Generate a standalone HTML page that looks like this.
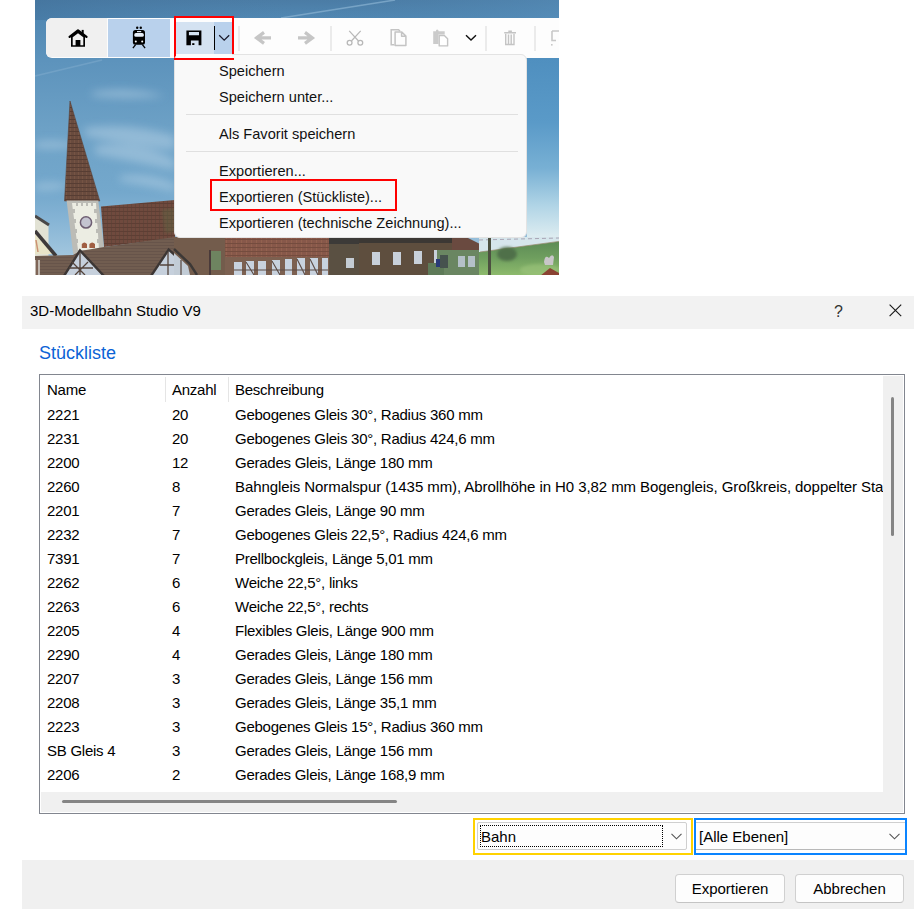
<!DOCTYPE html>
<html><head><meta charset="utf-8">
<style>
*{margin:0;padding:0;box-sizing:border-box}
html,body{width:914px;height:909px;background:#fff;overflow:hidden;position:relative;font-family:"Liberation Sans",sans-serif;color:#000}
.abs{position:absolute}
#scene{position:absolute;left:35px;top:0;width:524px;height:275px;overflow:hidden}
#scene svg{position:absolute;left:0;top:0}
.mi{position:absolute;left:44px;font-size:14.6px;line-height:20px;white-space:nowrap;color:#111}
.sep{position:absolute;left:11px;width:332px;height:1px;background:#e0e0e0}
#title{position:absolute;left:22px;top:296px;width:892px;height:33px;background:#f2f2f2}
.t{position:absolute;white-space:nowrap;font-size:15px;line-height:20px}
#lv{position:absolute;left:39px;top:374px;width:866px;height:440px;border:1px solid #82868f;background:#fff;overflow:hidden}
.row{position:absolute;left:0;height:24px;width:843px;overflow:hidden;font-size:15px;line-height:24px;white-space:nowrap;letter-spacing:-0.25px}
.row span{position:absolute;top:0}
.c1{left:7px}.c2{left:132px}.c3{left:195px}
.hdiv{position:absolute;top:2px;width:1px;height:25px;background:#e5e5e5}
#vtrack{position:absolute;left:843px;top:1px;width:20px;height:436px;background:#f0f0f0}
#htrack{position:absolute;left:1px;top:417px;width:862px;height:20px;background:#f0f0f0}
#vthumb{position:absolute;left:851px;top:22px;width:3px;height:139px;border-radius:2px;background:#858585}
#hthumb{position:absolute;left:22px;top:425px;width:335px;height:3px;border-radius:2px;background:#858585}
#footer{position:absolute;left:22px;top:860px;width:892px;height:49px;background:#f0f0f0}
.btn{position:absolute;top:874px;height:29px;border:1px solid #d0d0d0;border-bottom-color:#c4c4c4;border-radius:4px;background:#fdfdfd;font-size:15px;line-height:28px;text-align:center}
</style></head>
<body>

<div id="scene">
<svg width="524" height="275" viewBox="35 0 524 275">
<defs>
<linearGradient id="sky" x1="0" y1="0" x2="0" y2="275" gradientUnits="userSpaceOnUse">
<stop offset="0" stop-color="#4b7ca5"/>
<stop offset="0.066" stop-color="#5188b3"/>
<stop offset="0.22" stop-color="#5d93bc"/>
<stop offset="0.47" stop-color="#6da1c6"/>
<stop offset="0.70" stop-color="#74a8cc"/>
<stop offset="0.80" stop-color="#86b4d5"/>
<stop offset="0.93" stop-color="#a2c6de"/>
<stop offset="1" stop-color="#aacbe0"/>
</linearGradient>
<linearGradient id="skyR" x1="0" y1="58" x2="0" y2="242" gradientUnits="userSpaceOnUse">
<stop offset="0" stop-color="#4f8fbf"/>
<stop offset="0.35" stop-color="#5a9ac8"/>
<stop offset="0.6" stop-color="#78b0d4"/>
<stop offset="0.8" stop-color="#b0d4e6"/>
<stop offset="1" stop-color="#e4f0f2"/>
</linearGradient>
<linearGradient id="field" x1="0" y1="240" x2="0" y2="275" gradientUnits="userSpaceOnUse">
<stop offset="0" stop-color="#5c8a55"/>
<stop offset="0.5" stop-color="#6e9e5e"/>
<stop offset="1" stop-color="#8dba6c"/>
</linearGradient>
<linearGradient id="hz" x1="35" y1="0" x2="559" y2="0" gradientUnits="userSpaceOnUse">
<stop offset="0" stop-color="#40709a" stop-opacity="0.5"/>
<stop offset="0.5" stop-color="#4a7ca6" stop-opacity="0"/>
<stop offset="1" stop-color="#5890bc" stop-opacity="0.5"/>
</linearGradient>
<pattern id="roof3" width="3" height="3" patternUnits="userSpaceOnUse">
<rect width="3" height="3" fill="#715d50"/>
<rect x="0" y="2" width="3" height="1" fill="#67544a"/>
</pattern>
<filter id="bl" x="-30%" y="-100%" width="160%" height="300%"><feGaussianBlur stdDeviation="4"/></filter>
<filter id="bl1" x="-20%" y="-20%" width="140%" height="140%"><feGaussianBlur stdDeviation="0.7"/></filter>
<filter id="bl2" x="-20%" y="-20%" width="140%" height="140%"><feGaussianBlur stdDeviation="1.5"/></filter>
<pattern id="tiles" width="4" height="4" patternUnits="userSpaceOnUse">
<rect width="4" height="4" fill="#694b3e"/>
<rect x="0" y="3" width="4" height="1" fill="#573d33"/>
<rect x="2" y="0" width="1" height="3" fill="#765444"/>
</pattern>
<pattern id="tiles2" width="4" height="4" patternUnits="userSpaceOnUse">
<rect width="4" height="4" fill="#704a3e"/>
<rect x="0" y="3" width="4" height="1" fill="#5e3e34"/>
<rect x="3" y="0" width="1" height="3" fill="#62463a"/>
</pattern>
<pattern id="bricks" width="5" height="4" patternUnits="userSpaceOnUse">
<rect width="5" height="4" fill="#87584a"/>
<rect x="0" y="3" width="5" height="1" fill="#744c3e"/>
<rect x="1" y="0" width="1" height="3" fill="#93624f"/>
</pattern>
</defs>
<rect x="35" y="0" width="524" height="275" fill="url(#sky)"/>
<rect x="35" y="0" width="524" height="20" fill="url(#hz)"/>
<rect x="527" y="58" width="32" height="184" fill="url(#skyR)"/>
<!-- clouds -->
<g filter="url(#bl)" fill="#b0cee3" opacity="0.55">
<path d="M92 92Q130 86 165 96Q130 100 92 96Z"/>
<path d="M85 128Q130 122 175 136L175 150Q130 146 85 136Z"/>
<path d="M95 146Q140 140 175 160L175 170Q135 162 95 154Z"/>
<path d="M35 142Q60 138 80 146Q60 150 35 148Z"/>
<path d="M35 184Q55 180 70 186Q55 192 35 190Z"/>
<path d="M120 176Q150 172 175 184L175 192Q150 186 120 181Z"/>
</g>
<path d="M35 76L102 60" stroke="#92b8d6" stroke-width="1.4" opacity="0.35" filter="url(#bl1)"/>
<path d="M281 18L395 0" stroke="#8ab3d2" stroke-width="1.5" opacity="0.7" filter="url(#bl1)"/>
<!-- spire -->
<path d="M70 101L64.5 201H99.8Z" fill="url(#tiles)"/>
<path d="M70 101L64.5 201H99.8Z" fill="none" stroke="#5a3e34" stroke-width="0.7" opacity="0.8"/>
<!-- church roof -->
<path d="M101 206.5L175 200V238L104 247Z" fill="url(#tiles2)"/>
<path d="M162 210L175 208V232L165 233Z" fill="#5f6a45" opacity="0.4" filter="url(#bl2)"/>
<!-- tower -->
<path d="M66.6 200.5H98.3L103.8 247L104 254H73.2Z" fill="#bcbcb6"/>
<path d="M72 203H96L99 250H78Z" fill="#ecede3"/>
<g fill="#bcbcb6">
<rect x="72" y="209" width="3" height="4"/><rect x="73" y="219" width="3" height="4"/><rect x="74" y="229" width="3" height="4"/><rect x="75" y="239" width="3" height="4"/>
<rect x="94" y="209" width="3" height="4"/><rect x="95" y="219" width="3" height="4"/><rect x="96" y="229" width="3" height="4"/><rect x="97" y="239" width="3" height="4"/>
<rect x="76" y="203" width="2" height="3"/><rect x="81" y="203" width="2" height="3"/><rect x="86" y="203" width="2" height="3"/><rect x="91" y="203" width="2" height="3"/>
</g>
<circle cx="86" cy="222.4" r="5.6" fill="#c4c4d0" stroke="#6e5e72" stroke-width="1.5"/>
<path d="M81.8 248V244Q84.4 241 87 244V248Z" fill="#a05e42"/><path d="M89.4 248V244Q92.2 241 95 244V248Z" fill="#a05e42"/>
<!-- left building -->
<path d="M35 217L48.5 225V256H35Z" fill="#e2e2d4"/>
<path d="M35 216L49 225" stroke="#4a4848" stroke-width="3"/>
<path d="M35 232L53 254H35Z" fill="#e8e4c8"/>
<path d="M35 231L56 256" stroke="#3e3a3a" stroke-width="3.5"/>
<path d="M36 240L38 252" stroke="#c07050" stroke-width="1.5" opacity="0.7"/>
<!-- lower roof -->
<path d="M35 256L73 255L80 251L104 247L175 237V275H35Z" fill="url(#roof3)"/>
<rect x="35" y="260" width="5" height="15" fill="#c0b8b0"/>
<path d="M37 260V275" stroke="#6a4a3a" stroke-width="1.5"/>
<!-- gable 1 -->
<path d="M80 251L65 275H103Z" fill="#c6d0dc"/>
<path d="M64 276L80 250.5L104 276" stroke="#3c3634" stroke-width="2.4" fill="none"/>
<path d="M80 252V275 M69 268H93 M72 262L85 275 M88 262L75 275" stroke="#54443c" stroke-width="1.3"/>
<!-- gable 2 -->
<path d="M168.7 250L152 275H175V254Z" fill="#c6d0dc"/>
<path d="M151 276L168.7 249.5L177 257" stroke="#3c3634" stroke-width="2.4" fill="none"/>
<path d="M168 252V275 M160 265H175" stroke="#54443c" stroke-width="1.3"/>
<!-- bottom strip buildings -->
<rect x="174" y="237" width="52" height="38" fill="#735c4c"/>
<path d="M174 249L190 264L197 275" stroke="#3c3836" stroke-width="2.4" fill="none"/>
<path d="M174 253L188 266L190 275H174Z" fill="#c2ccd6"/>
<path d="M181 260V275" stroke="#54443c" stroke-width="1.2"/>
<rect x="211" y="251" width="10" height="19" fill="#6e8460"/>
<rect x="209" y="250" width="2" height="25" fill="#4a3a3a"/>
<rect x="225" y="237" width="104" height="22" fill="url(#bricks)"/>
<rect x="225" y="257" width="104" height="18" fill="#7c6050"/>
<g fill="#c8d2de">
<rect x="234" y="262" width="8" height="13"/><rect x="246" y="261" width="8" height="14"/><rect x="258" y="261" width="8" height="14"/><rect x="272" y="260" width="8" height="15"/><rect x="285" y="259" width="7" height="16"/><rect x="297" y="258" width="8" height="17"/><rect x="310" y="258" width="8" height="17"/><rect x="322" y="258" width="6" height="17"/>
</g>
<g stroke="#5a4a44" stroke-width="1.1"><path d="M246 262L254 275M272 261L280 275M297 259L305 275M310 259L318 275M234 270H328"/></g>
<rect x="329" y="237" width="30" height="38" fill="#5a5042"/>
<rect x="329" y="237" width="30" height="7" fill="#3c3a38"/>
<rect x="346" y="258" width="8" height="10" fill="#c4ccd4"/>
<rect x="359" y="237" width="100" height="38" fill="#5e4e3e"/>
<rect x="359" y="237" width="100" height="6" fill="#3c3834"/>
<g fill="#c8d0da">
<rect x="372" y="252" width="8" height="13"/><rect x="393" y="252" width="8" height="13"/><rect x="414" y="251" width="8" height="13"/><rect x="434" y="250" width="6" height="13"/>
</g>
<!-- signal box -->
<path d="M452 237H466L486 247L487 257H452Z" fill="#6a4a40"/>
<rect x="437" y="250" width="43" height="25" fill="#6a8662"/>
<rect x="428" y="263" width="16" height="12" fill="#5e7a58"/>
<rect x="458" y="256" width="7" height="11" fill="#b4c0c8"/><rect x="468" y="256" width="7" height="11" fill="#b4c0c8"/>
<rect x="440" y="255" width="8" height="13" fill="#46524e"/>
<rect x="436" y="259" width="4" height="8" fill="#2a3a78"/>
<!-- right landscape -->
<rect x="479" y="237" width="80" height="38" fill="url(#field)"/>
<path d="M479 237H559V241.4L480 252H479Z" fill="#d6e6ec"/>
<path d="M480 252L559 241.4" stroke="#9a8a70" stroke-width="1" opacity="0.7"/>
<path d="M479 240L559 238" stroke="#8a7a90" stroke-width="1" stroke-dasharray="4 3" opacity="0.6"/>
<ellipse cx="507" cy="254" rx="10" ry="7" fill="#50704a" filter="url(#bl2)"/>
<ellipse cx="540" cy="270" rx="20" ry="6" fill="#9cc47c" opacity="0.6" filter="url(#bl2)"/>
<rect x="488" y="237" width="3" height="38" fill="#4c5040"/>
<path d="M544 262Q545 254 549 258Q552 253 554 257L553 265H545Z" fill="#c8c6c8" filter="url(#bl1)"/>
<path d="M540 276L550 268L559 273V276Z" fill="#8a4232"/>
</svg>
</div>


<!-- toolbar -->
<div class="abs" style="left:46px;top:18px;width:513px;height:40px;background:#fdfdfd;border-radius:6px 0 0 6px;overflow:hidden">
 <div class="abs" style="left:0;top:0;width:61px;height:39px;background:#f0f0f0"></div>
 <div class="abs" style="left:62px;top:1px;width:62px;height:38px;background:#b9d1ec"></div>
 <div class="abs" style="left:130px;top:4px;width:38px;height:32px;background:#d4e2f1"></div>
 <div class="abs" style="left:168px;top:4px;width:18px;height:32px;background:#b9d1ec"></div>
 <div class="abs" style="left:168px;top:8px;width:1px;height:24px;background:#000"></div>
 <div class="abs" style="left:192px;top:8px;width:2px;height:25px;background:#ebebeb"></div>
 <div class="abs" style="left:284px;top:8px;width:2px;height:25px;background:#ebebeb"></div>
 <div class="abs" style="left:439px;top:8px;width:2px;height:25px;background:#ebebeb"></div>
 <div class="abs" style="left:488px;top:8px;width:2px;height:25px;background:#ebebeb"></div>
</div>
<svg class="abs" style="left:0;top:0" width="559" height="60" viewBox="0 0 559 60">
 <!-- home -->
 <path fill="#000" fill-rule="evenodd" d="M71 36L78 30.8L85 36V46.8H71Z M72.7 37.2L78 33.2L83.3 37.2V45.2H80.4V40H75.6V45.2H72.7Z"/>
 <path d="M69.6 36.9L78 30.4L86.5 36.9" stroke="#000" stroke-width="2.3" stroke-linecap="round" stroke-linejoin="round" fill="none"/>
 <rect x="81.7" y="29.9" width="2" height="4" fill="#000"/>
 <!-- train -->
 <circle cx="137.2" cy="27.8" r="1.2" fill="#000"/><circle cx="140.8" cy="27.8" r="1.2" fill="#000"/>
 <rect x="132.9" y="29.9" width="12.1" height="14.9" rx="2.5" fill="#000"/>
 <rect x="137" y="31" width="4.2" height="1.2" fill="#dfe9f5"/>
 <rect x="134.3" y="33" width="9.5" height="3.8" rx="1.6" fill="#e6eef8"/>
 <circle cx="135.8" cy="41.4" r="1" fill="#fff"/><circle cx="142.2" cy="41.4" r="1" fill="#fff"/>
 <path d="M135.6 44.6L132.9 48.2M142.4 44.6L145.1 48.2" stroke="#000" stroke-width="1.3"/>
 <!-- floppy -->
 <path fill="#000" fill-rule="evenodd" d="M186.4 30.5H201.4V45.2H186.4Z M188.9 32H199V35.2H188.9Z M190.9 40.6H198.6V45.2H190.9Z"/>
 <rect x="192.2" y="43.2" width="2.2" height="1.8" fill="#000"/>
 <path d="M219.2 35.2L224.2 40.2L229.2 35.2" stroke="#1a1a2a" stroke-width="1.3" fill="none"/>
 <!-- arrows -->
 <path d="M271 37.9H257 M264 32.4L256.6 37.9L264 43.4" stroke="#c6c6c6" stroke-width="3.2" fill="none"/>
 <path d="M298 37.9H312 M305 32.4L312.4 37.9L305 43.4" stroke="#c6c6c6" stroke-width="3.2" fill="none"/>
 <!-- scissors -->
 <path d="M349.2 30.9L358.5 41 M360.7 30.9L351.4 41" stroke="#b8b8b8" stroke-width="1.2" fill="none"/>
 <circle cx="349.6" cy="42.8" r="2.4" stroke="#b8b8b8" stroke-width="1.3" fill="none"/>
 <circle cx="360.3" cy="42.8" r="2.4" stroke="#b8b8b8" stroke-width="1.3" fill="none"/>
 <!-- copy -->
 <path d="M394.4 44.7H391.2V29.7H398.6L400 31.3" stroke="#c4c4c4" stroke-width="1.5" fill="none"/>
 <path d="M395.1 32H401.8L405.9 36.1V45.5H395.1Z M401.6 32V36.3H405.9" stroke="#c4c4c4" stroke-width="1.5" fill="none" stroke-linejoin="round"/>
 <!-- paste -->
 <path d="M433.2 31.2H436V30.4Q437 28.8 438.5 30.4V31.2H444.7V34.6H438.5V44H433.2Z" fill="#cbcbcb"/>
 <path d="M439.2 35.5H444.3L447.6 38.8V45.9H439.2Z" stroke="#c4c4c4" stroke-width="1.4" fill="#fff" stroke-linejoin="round"/>
 <path d="M466 35.2L471 40.1L476 35.2" stroke="#111" stroke-width="1.4" fill="none"/>
 <!-- trash -->
 <path d="M504.2 32.7H516 M508.3 31.2H511.9" stroke="#c4c4c4" stroke-width="1.4" fill="none"/>
 <path d="M505.7 33.8V44.5H514V33.8 M508.5 34.5V44 M511.2 34.5V44" stroke="#c4c4c4" stroke-width="1.4" fill="none"/>
 <!-- last -->
 <path d="M552 31V40.5H556 M552 31H559" stroke="#c8c8c8" stroke-width="1.6" fill="none"/>
 <rect x="551" y="44" width="1.6" height="1.6" fill="#c8c8c8"/>
 <!-- red box -->
 <rect x="175" y="17" width="58" height="42" fill="none" stroke="#ff0000" stroke-width="2"/>
</svg>

<!-- menu -->
<div class="abs" style="left:174px;top:54px;width:353px;height:184px;background:#f9f9f9;border:1px solid #e3e3e3;border-radius:6px;overflow:hidden">
 <div class="mi" style="top:6px">Speichern</div>
 <div class="mi" style="top:32px">Speichern unter...</div>
 <div class="sep" style="top:59px"></div>
 <div class="mi" style="top:69px">Als Favorit speichern</div>
 <div class="sep" style="top:96px"></div>
 <div class="mi" style="top:106px">Exportieren...</div>
 <div class="mi" style="top:132px">Exportieren (Stückliste)...</div>
 <div class="mi" style="top:158px">Exportieren (technische Zeichnung)...</div>
</div>
<svg class="abs" style="left:170px;top:170px" width="240" height="50"><rect x="41" y="10" width="185" height="30" fill="none" stroke="#ff0000" stroke-width="2"/></svg>
<div class="abs" style="left:176px;top:54px;width:56px;height:4px;background:#fdfdfd"></div>
<div class="abs" style="left:174px;top:58px;width:60px;height:2px;background:#ff0000"></div>

<!-- dialog -->
<div id="title">
<div class="t" style="left:8px;top:5px">3D-Modellbahn Studio V9</div>
<div class="t" style="left:812px;top:6px;font-size:16px;color:#333">?</div>
<svg class="abs" style="left:867px;top:8px" width="13" height="13" viewBox="0 0 13 13"><path d="M0.6 0.6L12.2 12.2M12.2 0.6L0.6 12.2" stroke="#1a1a1a" stroke-width="1.15" fill="none"/></svg>
</div>
<div class="t" style="left:39px;top:342px;font-size:18px;line-height:22px;color:#0b63d6">Stückliste</div>

<div id="lv">
<div class="row" style="top:3px"><span class="c1">Name</span><span class="c2">Anzahl</span><span class="c3">Beschreibung</span></div>
<div class="row" style="top:28px"><span class="c1">2221</span><span class="c2">20</span><span class="c3">Gebogenes Gleis 30°, Radius 360 mm</span></div>
<div class="row" style="top:52px"><span class="c1">2231</span><span class="c2">20</span><span class="c3">Gebogenes Gleis 30°, Radius 424,6 mm</span></div>
<div class="row" style="top:76px"><span class="c1">2200</span><span class="c2">12</span><span class="c3">Gerades Gleis, Länge 180 mm</span></div>
<div class="row" style="top:100px"><span class="c1">2260</span><span class="c2">8</span><span class="c3" style="letter-spacing:-0.075px">Bahngleis Normalspur (1435 mm), Abrollhöhe in H0 3,82 mm Bogengleis, Großkreis, doppelter Sta</span></div>
<div class="row" style="top:124px"><span class="c1">2201</span><span class="c2">7</span><span class="c3">Gerades Gleis, Länge 90 mm</span></div>
<div class="row" style="top:148px"><span class="c1">2232</span><span class="c2">7</span><span class="c3">Gebogenes Gleis 22,5°, Radius 424,6 mm</span></div>
<div class="row" style="top:172px"><span class="c1">7391</span><span class="c2">7</span><span class="c3">Prellbockgleis, Länge 5,01 mm</span></div>
<div class="row" style="top:196px"><span class="c1">2262</span><span class="c2">6</span><span class="c3">Weiche 22,5°, links</span></div>
<div class="row" style="top:220px"><span class="c1">2263</span><span class="c2">6</span><span class="c3">Weiche 22,5°, rechts</span></div>
<div class="row" style="top:244px"><span class="c1">2205</span><span class="c2">4</span><span class="c3">Flexibles Gleis, Länge 900 mm</span></div>
<div class="row" style="top:268px"><span class="c1">2290</span><span class="c2">4</span><span class="c3">Gerades Gleis, Länge 180 mm</span></div>
<div class="row" style="top:292px"><span class="c1">2207</span><span class="c2">3</span><span class="c3">Gerades Gleis, Länge 156 mm</span></div>
<div class="row" style="top:316px"><span class="c1">2208</span><span class="c2">3</span><span class="c3">Gerades Gleis, Länge 35,1 mm</span></div>
<div class="row" style="top:340px"><span class="c1">2223</span><span class="c2">3</span><span class="c3">Gebogenes Gleis 15°, Radius 360 mm</span></div>
<div class="row" style="top:364px"><span class="c1">SB Gleis 4</span><span class="c2">3</span><span class="c3">Gerades Gleis, Länge 156 mm</span></div>
<div class="row" style="top:388px"><span class="c1">2206</span><span class="c2">2</span><span class="c3">Gerades Gleis, Länge 168,9 mm</span></div>
<div class="hdiv" style="left:125px"></div><div class="hdiv" style="left:188px"></div>
<div id="vtrack"></div><div id="vthumb"></div>
<div id="htrack"></div><div id="hthumb"></div>

</div>


<!-- combos -->
<div class="abs" style="left:473px;top:818px;width:220px;height:37px;border:2px solid #ffd200"></div>
<div class="abs" style="left:477px;top:822px;width:210px;height:28px;border:1px solid #cfcfcf;border-radius:2px;background:#fdfdfd"></div>
<div class="abs" style="left:480px;top:825px;width:183px;height:22px;border:1px dotted #000"></div>
<div class="t" style="left:481px;top:827px">Bahn</div>
<svg class="abs" style="left:671px;top:833px" width="11" height="7" viewBox="0 0 11 7"><path d="M0.5 0.8L5.5 5.8L10.5 0.8" stroke="#555" stroke-width="1.1" fill="none"/></svg>
<div class="abs" style="left:694px;top:818px;width:213px;height:37px;border:2px solid #0a84ff"></div>
<div class="abs" style="left:696px;top:822px;width:209px;height:28px;border-top:1px solid #cfcfcf;border-bottom:1px solid #b9b9b9;background:#fdfdfd"></div>
<div class="t" style="left:699px;top:827px">[Alle Ebenen]</div>
<svg class="abs" style="left:889px;top:833px" width="11" height="7" viewBox="0 0 11 7"><path d="M0.5 0.8L5.5 5.8L10.5 0.8" stroke="#555" stroke-width="1.1" fill="none"/></svg>
<div id="footer"></div>
<div class="btn" style="left:675px;width:110px">Exportieren</div>
<div class="btn" style="left:795px;width:109px">Abbrechen</div>

</body></html>
